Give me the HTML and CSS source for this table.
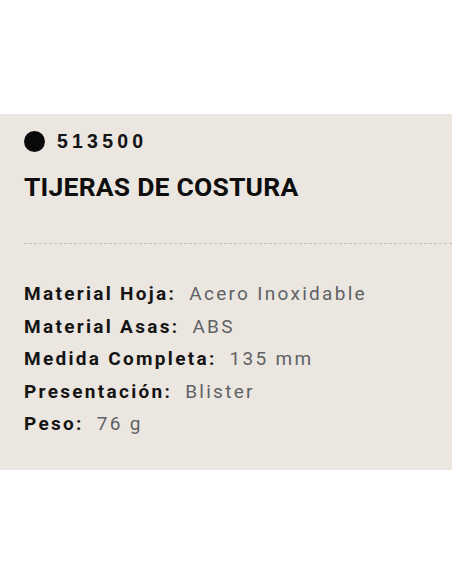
FILE: index.html
```html
<!DOCTYPE html>
<html lang="es">
<head>
<meta charset="utf-8">
<title>513500 Tijeras de costura</title>
<link rel="stylesheet" href="styles.css">
</head>
<body>
<main class="page">
  <section class="product">
    <div class="ref">
      <span class="dot"></span>
      <span class="code">513500</span>
    </div>
    <h1 class="title">TIJERAS DE COSTURA</h1>
    <hr class="divider">
    <dl class="specs">
      <div class="spec"><dt>Material Hoja:</dt><dd>Acero Inoxidable</dd></div>
      <div class="spec"><dt>Material Asas:</dt><dd>ABS</dd></div>
      <div class="spec"><dt>Medida Completa:</dt><dd>135 mm</dd></div>
      <div class="spec"><dt>Presentación:</dt><dd>Blister</dd></div>
      <div class="spec"><dt>Peso:</dt><dd>76 g</dd></div>
    </dl>
  </section>
</main>
</body>
</html>
```

FILE: styles.css
```css
* { box-sizing: border-box; }

html, body {
  margin: 0;
  padding: 0;
  background: #ffffff;
}

.page {
  padding-top: 114px;
}

.product {
  background: #ebe6e0;
  height: 356px;
  padding: 15px 0 0 24px;
}

.ref {
  display: flex;
  align-items: center;
  gap: 12px;
  height: 24px;
}

.dot {
  width: 21px;
  height: 21px;
  border-radius: 50%;
  background: #0a0a0a;
}

.code {
  font-family: "Liberation Sans", Arial, sans-serif;
  font-weight: 700;
  font-size: 19.5px;
  line-height: 24px;
  letter-spacing: 4.2px;
  color: #141414;
}

.title {
  margin: 18px 0 0;
  font-family: Roboto, "Liberation Sans", sans-serif;
  font-weight: 700;
  font-size: 26.5px;
  line-height: 31px;
  color: #0e0e0e;
  letter-spacing: 0.2px;
}

.divider {
  margin: 41px 0 0;
  border: 0;
  border-top: 1px dashed #c4bfb9;
  height: 0;
}

.specs {
  margin: 34px 0 0;
  padding: 0;
}

.spec {
  display: flex;
  gap: 13px;
  font-family: Roboto, "Liberation Sans", sans-serif;
  font-size: 19px;
  line-height: 32.5px;
  letter-spacing: 2.3px;
}

.spec dt {
  font-weight: 700;
  color: #141414;
}

.spec dd {
  margin: 0;
  color: #5f6265;
}
```
